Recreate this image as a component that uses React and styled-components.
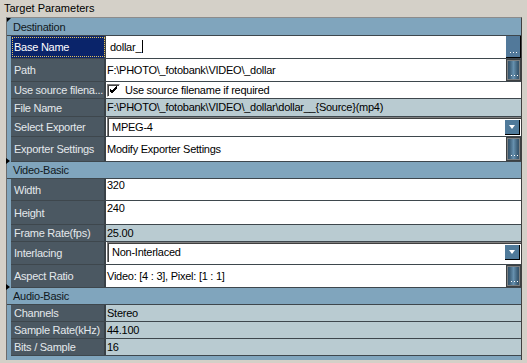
import React from 'react';
import styled, { createGlobalStyle, css } from 'styled-components';

const Global = createGlobalStyle`
  *, *::before, *::after { box-sizing: border-box; }
  html, body { margin: 0; padding: 0; background: #d4d0c8; }
  body { font-family: "Liberation Sans", Arial, sans-serif; font-size: 11px; letter-spacing: -0.25px; }
`;

const Page = styled.div`
  width: 527px;
  height: 363px;
  overflow: hidden;
  background: #d4d0c8;
  display: flex;
  flex-direction: column;
`;

const Title = styled.div`
  height: 17px;
  line-height: 16px;
  padding-left: 4px;
  color: #000;
  letter-spacing: 0;
`;

const Grid = styled.div`
  margin-left: 6px;
  width: 516px;
  border-top: 1px solid #8c8c8c;
  border-left: 1px solid #6c6c6c;
  border-right: 1px solid #404040;
  background: #80a5bd;
  padding-bottom: 4px;
  display: flex;
  flex-direction: column;
`;

const CatRow = styled.div`
  position: relative;
  height: ${(p) => p.$h}px;
  flex: none;
  border-bottom: 1px solid #3e474d;
  display: flex;
  align-items: center;
  padding-left: 6px;
  color: #101820;
  ${(p) =>
    p.$marker === 'corner' &&
    css`
      &::before {
        content: '';
        position: absolute;
        left: 0;
        top: 0;
        border-top: 4px solid #000;
        border-right: 4px solid transparent;
      }
    `}
  ${(p) =>
    p.$marker === 'arrow' &&
    css`
      &::before {
        content: '';
        position: absolute;
        left: -1px;
        top: -4px;
        border-left: 4px solid #000;
        border-top: 3px solid transparent;
        border-bottom: 3px solid transparent;
      }
    `}
`;

const PropRow = styled.div`
  display: flex;
  height: ${(p) => p.$h}px;
  flex: none;
`;

const Strip = styled.div`
  width: 4px;
  flex: none;
`;

const Cells = styled.div`
  flex: 1;
  min-width: 0;
  display: flex;
  border-bottom: 1px solid #3e474d;
`;

const Label = styled.div`
  width: 95px;
  flex: none;
  border-right: 2px solid #394147;
  background: ${(p) => (p.$selected ? '#0a246a' : '#4b5862')};
  color: ${(p) => (p.$selected ? '#ffffff' : '#e4e8ec')};
  padding-left: 3px;
  display: flex;
  align-items: center;
  white-space: nowrap;
  overflow: hidden;
  ${(p) =>
    p.$selected &&
    css`
      outline: 1px dotted #e0c060;
      outline-offset: -2px;
    `}
`;

const Value = styled.div`
  flex: 1;
  min-width: 0;
  display: flex;
  align-items: ${(p) => (p.$top ? 'flex-start' : 'center')};
  padding-top: ${(p) => p.$pt || 0}px;
  background: ${(p) => (p.$ro ? '#b9cbd1' : '#ffffff')};
  color: #000;
  padding-left: 1px;
  white-space: nowrap;
  overflow: hidden;
`;

const Text = styled.span`
  flex: 1;
  min-width: 0;
  padding-left: ${(p) => p.$pl || 0}px;
  line-height: 13px;
`;

const Caret = styled.span`
  display: inline-block;
  width: 1px;
  height: 13px;
  background: #000;
  vertical-align: -2px;
  margin-left: 1px;
`;

const Dots = styled.span`
  position: absolute;
  left: 4px;
  bottom: 4px;
  width: 1px;
  height: 1px;
  background: #fff;
  box-shadow: 3px 0 0 #fff, 6px 0 0 #fff;
`;

const FlatButton = styled.div`
  position: relative;
  flex: none;
  width: 15px;
  align-self: stretch;
  background: #52799a;
  border-right: 1px solid #000;
  border-bottom: 1px solid #000;
`;

const BevelButton = styled.div`
  position: relative;
  flex: none;
  width: 15px;
  align-self: stretch;
  border: 1px solid #3c4042;
  box-shadow: inset 0 0 0 1px #7c8082;
  background: linear-gradient(90deg, #2f4a60 0%, #3d5f78 20%, #6690ae 50%, #3d5f78 80%, #2f4a60 100%);
`;

const Combo = styled.div`
  flex: 1;
  align-self: stretch;
  margin-bottom: ${(p) => p.$mb || 0}px;
  display: flex;
  align-items: center;
  background: #fff;
  border-top: 1px solid #808080;
  border-left: 1px solid #808080;
  box-shadow: inset 1px 1px 0 #404040;
  padding-left: 4px;
`;

const ComboText = styled.span`
  flex: 1;
  line-height: 13px;
`;

const ComboButton = styled.div`
  flex: none;
  width: 15px;
  height: 15px;
  margin-right: 1px;
  background: #4f7a9a;
  border-right: 1px solid #000;
  border-bottom: 1px solid #000;
  display: flex;
  align-items: center;
  justify-content: center;
  &::after {
    content: '';
    border-top: 4px solid #fff;
    border-left: 3.5px solid transparent;
    border-right: 3.5px solid transparent;
  }
`;

const CheckBox = styled.span`
  flex: none;
  width: 13px;
  height: 13px;
  margin-right: 5px;
  background: #fff;
  border-top: 1px solid #808080;
  border-left: 1px solid #808080;
  border-bottom: 1px solid #ffffff;
  border-right: 1px solid #ffffff;
  box-shadow: inset 1px 1px 0 #404040;
  display: flex;
  align-items: center;
  justify-content: center;
`;

const CheckField = styled.div`
  flex: 1;
  display: flex;
  align-items: center;
`;

function Prop({ h, label, selected, children, ro, top, pt }) {
  return (
    <PropRow $h={h}>
      <Strip />
      <Cells>
        <Label $selected={selected}>{label}</Label>
        <Value $ro={ro} $top={top} $pt={pt}>
          {children}
        </Value>
      </Cells>
    </PropRow>
  );
}

export default function App() {
  return (
    <>
      <Global />
      <Page>
        <Title>Target Parameters</Title>
        <Grid>
          <CatRow $h={18} $marker="corner">Destination</CatRow>
          <Prop h={23} label="Base Name" selected>
            <Text $pl={3}>
              dollar_
              <Caret />
            </Text>
            <FlatButton>
              <Dots />
            </FlatButton>
          </Prop>
          <Prop h={23} label="Path">
            <Text>F:\PHOTO\_fotobank\VIDEO\_dollar</Text>
            <BevelButton>
              <Dots />
            </BevelButton>
          </Prop>
          <Prop h={17} label="Use source filena...">
            <CheckField>
              <CheckBox>
                <svg width="9" height="9" viewBox="0 0 9 9">
                  <path d="M1 4 L3 6 L8 1 M1 5 L3 7 L8 2 M1 3 L3 5 L8 0" stroke="#000" strokeWidth="1" fill="none" />
                </svg>
              </CheckBox>
              <Text>Use source filename if required</Text>
            </CheckField>
          </Prop>
          <Prop h={18} label="File Name" ro>
            <Text>F:\PHOTO\_fotobank\VIDEO\_dollar\dollar__{'{'}Source{'}'}(mp4)</Text>
          </Prop>
          <Prop h={20} label="Select Exporter">
            <Combo>
              <ComboText>MPEG-4</ComboText>
              <ComboButton />
            </Combo>
          </Prop>
          <Prop h={25} label="Exporter Settings">
            <Text>Modify Exporter Settings</Text>
            <BevelButton>
              <Dots />
            </BevelButton>
          </Prop>
          <CatRow $h={17} $marker="arrow">Video-Basic</CatRow>
          <Prop h={22} label="Width" top>
            <Text>320</Text>
          </Prop>
          <Prop h={24} label="Height" top pt={1}>
            <Text>240</Text>
          </Prop>
          <Prop h={17} label="Frame Rate(fps)" ro>
            <Text>25.00</Text>
          </Prop>
          <Prop h={23} label="Interlacing">
            <Combo $mb={2}>
              <ComboText>Non-Interlaced</ComboText>
              <ComboButton />
            </Combo>
          </Prop>
          <Prop h={23} label="Aspect Ratio">
            <Text>Video: [4 : 3], Pixel: [1 : 1]</Text>
            <BevelButton>
              <Dots />
            </BevelButton>
          </Prop>
          <CatRow $h={17} $marker="arrow">Audio-Basic</CatRow>
          <Prop h={17} label="Channels" ro>
            <Text>Stereo</Text>
          </Prop>
          <Prop h={17} label="Sample Rate(kHz)" ro>
            <Text>44.100</Text>
          </Prop>
          <Prop h={17} label="Bits / Sample" ro>
            <Text>16</Text>
          </Prop>
        </Grid>
      </Page>
    </>
  );
}
